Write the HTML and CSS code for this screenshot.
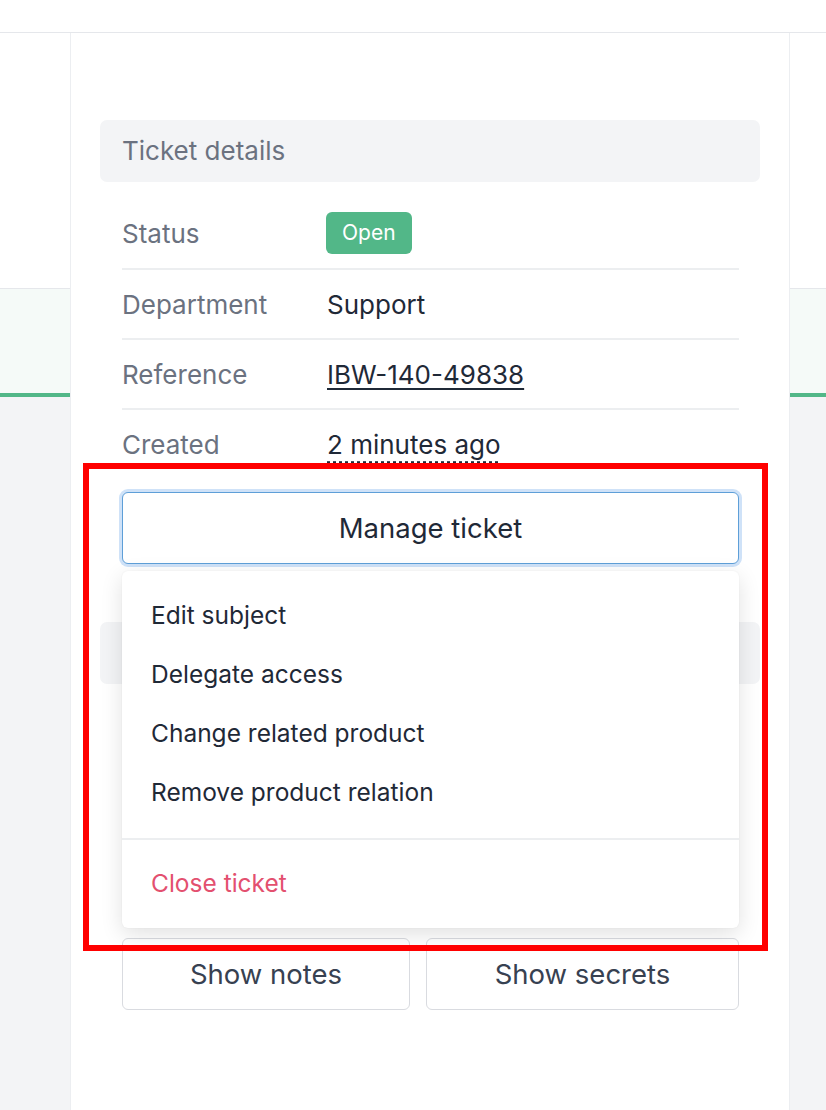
FILE: index.html
```html
<!DOCTYPE html>
<html lang="en">
<head>
  <meta charset="UTF-8" />
  <meta name="viewport" content="width=device-width, initial-scale=1.0" />
  <title>Ticket details</title>
  <link rel="stylesheet" href="styles.css">
</head>
<body>
  <main class="panel">
    <div class="section-title">Ticket details</div>
    <dl class="details">
      <div class="row">
        <dt>Status</dt>
        <dd><span class="badge">Open</span></dd>
      </div>
      <div class="row">
        <dt>Department</dt>
        <dd>Support</dd>
      </div>
      <div class="row">
        <dt>Reference</dt>
        <dd><a href="#" class="ref">IBW-140-49838</a></dd>
      </div>
      <div class="row">
        <dt>Created</dt>
        <dd><span class="time">2 minutes ago</span></dd>
      </div>
    </dl>

    <div class="manage">
      <button class="manage-btn">Manage ticket</button>
      <ul class="dropdown">
        <li><a href="#">Edit subject</a></li>
        <li><a href="#">Delegate access</a></li>
        <li><a href="#">Change related product</a></li>
        <li><a href="#">Remove product relation</a></li>
        <li class="sep"></li>
        <li><a href="#" class="danger">Close ticket</a></li>
      </ul>
    </div>

    <div class="section-title hidden-title"></div>
    <div class="spacer"></div>

    <div class="actions">
      <button class="btn">Show notes</button>
      <button class="btn">Show secrets</button>
    </div>
  </main>

  <div class="highlight"></div>
</body>
</html>
```

FILE: styles.css
```css
body {
  margin: 0;
  min-height: 1110px;
  font-family: 'Inter', 'Liberation Sans', sans-serif;
  color: #1f2937;
  background: linear-gradient(to bottom,
    #fff 0 32px,
    #e5e7eb 32px 33px,
    #fff 33px 288px,
    #e5e7eb 288px 289px,
    #f5faf8 289px 393px,
    #52b788 393px 397px,
    #f3f4f6 397px);
  position: relative;
}
.panel {
  margin: 33px 0 0 70px;
  width: 720px;
  min-height: 1077px;
  box-sizing: border-box;
  background: #fff;
  border-left: 1px solid #eceef1;
  border-right: 1px solid #eceef1;
  padding: 87px 29px 0;
}
.section-title {
  background: #f3f4f6;
  border-radius: 7px;
  height: 62px;
  line-height: 62px;
  padding: 0 22px;
  font-size: 26px;
  color: #6b7280;
}
.details {
  margin: 16px 21px 0 22px;
}
.row {
  display: flex;
  align-items: center;
  height: 68px;
  border-bottom: 2px solid #eceef0;
  font-size: 26px;
}
.row:first-child {
  height: 70px;
}
.row:last-child {
  border-bottom: none;
}
.row dt {
  width: 205px;
  color: #6b7280;
}
.row dd {
  margin: 0;
  color: #1f2937;
}
.badge {
  display: inline-block;
  margin-left: -1px;
  background: #52b788;
  color: #fff;
  font-size: 21px;
  padding: 0 16px;
  height: 42px;
  line-height: 42px;
  border-radius: 6px;
}
.ref {
  color: #1f2937;
  text-decoration: underline;
  text-underline-offset: 4px;
}
.time {
  text-decoration: underline dotted;
  text-underline-offset: 8px;
}
.manage {
  position: relative;
  margin: 14px 21px 0 22px;
}
.manage-btn {
  display: block;
  width: 100%;
  height: 72px;
  background: #fff;
  border: 1px solid #5e9fd8;
  border-radius: 6px;
  box-shadow: 0 0 0 3px #cfe2f8;
  font-family: inherit;
  font-size: 27.5px;
  color: #1f2937;
}
.dropdown {
  position: absolute;
  top: 79px;
  left: 0;
  right: 0;
  z-index: 2;
  margin: 0;
  padding: 15px 0;
  list-style: none;
  background: #fff;
  border-radius: 6px;
  box-shadow: 0 6px 22px rgba(0, 0, 0, 0.12), 0 0 2px rgba(0, 0, 0, 0.06);
}
.dropdown a {
  display: block;
  padding: 0 29px;
  line-height: 59px;
  font-size: 24.5px;
  color: #1f2937;
  text-decoration: none;
}
.dropdown .sep {
  height: 2px;
  background: #eceef0;
  margin: 16px 0 14px;
}
.dropdown a.danger {
  color: #e3506f;
}
.hidden-title {
  margin-top: 58px;
}
.spacer {
  height: 254px;
}
.actions {
  display: flex;
  gap: 16px;
  margin: 0 21px 0 22px;
}
.btn {
  height: 72px;
  background: #fff;
  border: 1px solid #d9dbe0;
  border-radius: 6px;
  font-family: inherit;
  font-size: 27.5px;
  color: #374151;
}
.btn:first-child {
  width: 288px;
}
.btn:last-child {
  flex: 1;
}
.highlight {
  position: absolute;
  left: 83px;
  top: 463px;
  width: 685px;
  height: 488px;
  box-sizing: border-box;
  border: 6px solid #ff0000;
  z-index: 5;
}
```
